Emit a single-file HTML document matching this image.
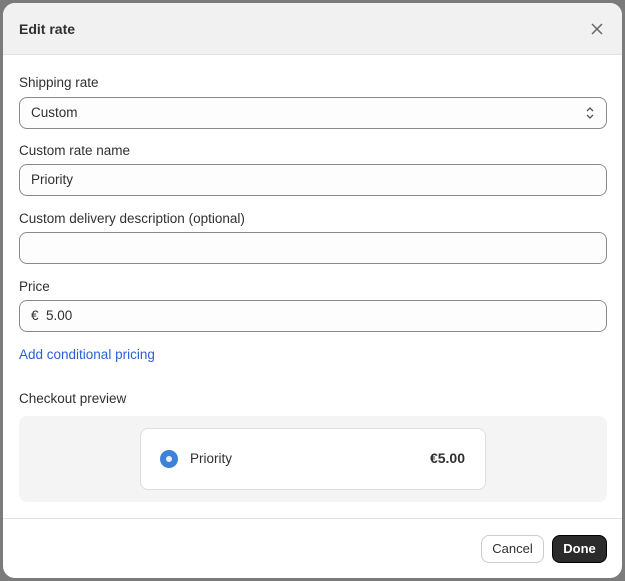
<!DOCTYPE html><html><head><style>
*{box-sizing:border-box;margin:0;padding:0}
body{width:625px;height:581px;background:#7b7b7b;font-family:"Liberation Sans",sans-serif;font-size:13.5px;color:#303030;position:relative;overflow:hidden}
.m{position:absolute;left:3px;top:3px;width:619px;height:575px;background:#fff;border-radius:12px;overflow:hidden}
.h{height:52px;background:#f1f1f1;border-bottom:1px solid #e1e1e1;position:relative}
.h b{position:absolute;left:16px;top:18px;font-size:14px;color:#303030}
.x{position:absolute;left:587px;top:19px}
.l{position:absolute;left:16px;font-size:13.5px}
.i{position:absolute;left:16px;width:588px;height:32px;border:1px solid #8a8a8a;border-radius:8px;background:#fdfdfd;padding:0 11px;line-height:30px}
a{position:absolute;left:16px;color:#2c5fd6;text-decoration:none}
.g{position:absolute;left:16px;top:413px;width:588px;height:86px;background:#f4f4f4;border-radius:8px}
.c{position:absolute;left:121px;top:12px;width:346px;height:62px;background:#fff;border:1px solid #ddd;border-radius:8px}
.f{position:absolute;left:0;top:515px;width:619px;border-top:1px solid #e1e1e1}
.btn{position:absolute;top:532px;height:28px;border-radius:8px;font-size:13px;line-height:26px;text-align:center}
</style></head><body>
<div class="m">
<div class="h"><b>Edit rate</b><svg class="x" width="14" height="14" viewBox="0 0 14 14"><path d="M2 2L12 12M12 2L2 12" stroke="#666" stroke-width="1.5"/></svg></div>
<div class="l" style="top:72px">Shipping rate</div>
<div class="i" style="top:94px">Custom<svg style="position:absolute;right:11px;top:8px" width="10" height="14" viewBox="0 0 10 14"><path d="M2 5L5 2L8 5M2 9L5 12L8 9" fill="none" stroke="#555" stroke-width="1.3"/></svg></div>
<div class="l" style="top:140px">Custom rate name</div>
<div class="i" style="top:161px">Priority</div>
<div class="l" style="top:208px">Custom delivery description (optional)</div>
<div class="i" style="top:229px"></div>
<div class="l" style="top:276px">Price</div>
<div class="i" style="top:297px">€&nbsp; 5.00</div>
<a style="top:344px">Add conditional pricing</a>
<div class="l" style="top:388px">Checkout preview</div>
<div class="g"><div class="c">
<div style="position:absolute;left:19px;top:21px;width:18px;height:18px;border-radius:50%;background:#3b82d8"><div style="position:absolute;left:6px;top:6px;width:6px;height:6px;border-radius:50%;background:#eee"></div></div>
<div style="position:absolute;left:49px;top:22px">Priority</div>
<div style="position:absolute;right:20px;top:21px;font-weight:bold;font-size:14px">€5.00</div>
</div></div>
<div class="f"></div>
<div class="btn" style="left:478px;width:63px;border:1px solid #ccc;background:#fff">Cancel</div>
<div class="btn" style="left:549px;width:55px;background:#2b2b2b;color:#fff;font-weight:bold;border:1px solid #000">Done</div>
</div>
</body></html>
